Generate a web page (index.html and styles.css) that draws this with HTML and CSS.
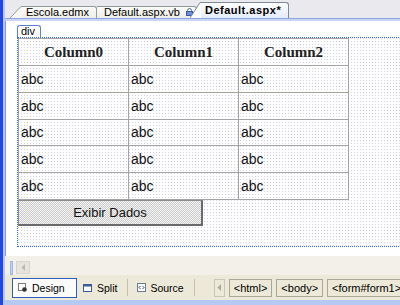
FILE: index.html
```html
<!DOCTYPE html>
<html lang="pt">
<head>
  <meta charset="UTF-8" />
  <title>Default.aspx - Design</title>
  <link rel="stylesheet" href="styles.css">
</head>
<body>
  <div class="window">
    <div class="edge"></div>
    <div class="main">

      <div class="tabbar">
        <div class="tab first">
          <svg class="slant" width="12" height="12" viewBox="0 0 12 12"><path d="M0 12 L11 0.5 L12 0.5 L12 12 Z" fill="#f6f5f0"/><path d="M0 12 L11 0.5 L12 0.5" fill="none" stroke="#919b9c"/></svg>
          <span class="tab-body">Escola.edmx</span>
        </div>
        <div class="tab second">
          <span class="tab-body">Default.aspx.vb
            <svg class="lock" width="7" height="8" viewBox="0 0 7 8"><path d="M1.5 4 V2.5 a2 2 0 0 1 4 0 V4" fill="none" stroke="#4c66b8"/><rect x="0.5" y="3.5" width="6" height="4" fill="#6f8fd8" stroke="#3e58a8"/></svg>
          </span>
        </div>
        <div class="tab active">
          <svg class="slant" width="11" height="16" viewBox="0 0 11 16"><path d="M0 16 L10 0.5 L11 0.5 L11 16 Z" fill="#ffffff"/><path d="M0 16 L10 0.5 L11 0.5" fill="none" stroke="#7f8a99"/></svg>
          <span class="tab-body">Default.aspx*</span>
        </div>
      </div>
      <div class="band"></div>

      <div class="surface">
        <div class="tag">div</div>
        <div class="box">
          <table class="grid">
            <tr><th>Column0</th><th>Column1</th><th>Column2</th></tr>
            <tr><td>abc</td><td>abc</td><td>abc</td></tr>
            <tr><td>abc</td><td>abc</td><td>abc</td></tr>
            <tr><td>abc</td><td>abc</td><td>abc</td></tr>
            <tr><td>abc</td><td>abc</td><td>abc</td></tr>
            <tr><td>abc</td><td>abc</td><td>abc</td></tr>
          </table>
          <button class="btn">Exibir Dados</button>
        </div>
      </div>

      <div class="hscroll">
        <span class="grip"></span>
        <span class="scroll-btn"><svg width="5" height="7" viewBox="0 0 5 7"><path d="M4 0 L0.5 3.5 L4 7 Z" fill="#b8b8b0"/></svg></span>
      </div>

      <div class="viewbar">
        <span class="view selected">
          <svg width="9" height="9" viewBox="0 0 9 9"><rect x="0.5" y="0.5" width="7" height="7" fill="#fff" stroke="#7c7c7c"/><circle cx="6.5" cy="6.5" r="2.3" fill="#333"/></svg>
          Design
        </span>
        <span class="view">
          <svg width="9" height="8" viewBox="0 0 9 8"><rect x="0.5" y="0.5" width="8" height="7" fill="#fff" stroke="#3a5a9c"/><rect x="0.5" y="0.5" width="8" height="2" fill="#3a5a9c"/></svg>
          Split
        </span>
        <span class="sep"></span>
        <span class="view">
          <svg width="9" height="9" viewBox="0 0 9 9"><rect x="0.5" y="0.5" width="8" height="8" fill="#fff" stroke="#6d7c9c"/><path d="M3.5 3 L2 4.5 L3.5 6 M5.5 3 L7 4.5 L5.5 6" fill="none" stroke="#3a4a7a"/></svg>
          Source
        </span>
        <span class="sep"></span>
        <span class="crumb-arrow"><svg width="4" height="7" viewBox="0 0 4 7"><path d="M4 0 L0.5 3.5 L4 7 Z" fill="#a8a8a0"/></svg></span>
        <span class="crumb">&lt;html&gt;</span>
        <span class="crumb">&lt;body&gt;</span>
        <span class="crumb">&lt;form#form1&gt;</span>
      </div>
      <div class="footline"></div>

    </div>
  </div>
</body>
</html>
```

FILE: styles.css
```css
* { box-sizing: border-box; }
body {
  margin: 0;
  font-family: 'Liberation Sans', Arial, sans-serif;
  background: #ffffff;
  color: #000;
}
.window {
  width: 400px;
  height: 305px;
  display: flex;
  overflow: hidden;
}
.edge {
  width: 5px;
  flex: none;
  background: linear-gradient(to right, #1f47e5 0 3px, #bac4ee 3px);
}
.main {
  flex: 1;
  min-width: 0;
  display: flex;
  flex-direction: column;
}

/* document tabs */
.tabbar {
  height: 19px;
  flex: none;
  display: flex;
  align-items: flex-end;
  padding-left: 5px;
  background: #eae9ee;
  border-bottom: 1px solid #8ea5e2;
}
.tab {
  display: flex;
  flex: none;
  align-items: flex-end;
  font-size: 11px;
}
.slant { display: block; flex: none; }
.tab-body {
  display: flex;
  align-items: flex-end;
  height: 12px;
  line-height: 12px;
  background: linear-gradient(#fbfbf8, #eeede6);
  border-top: 1px solid #919b9c;
  border-right: 1px solid #919b9c;
  border-top-right-radius: 3px;
  white-space: nowrap;
}
.first .tab-body { width: 75px; padding-left: 4px; }
.second .tab-body { width: 100px; padding-left: 7px; }
.lock { margin: 0 0 2px 6px; }
.active { margin-left: -7px; position: relative; }
.active .tab-body {
  height: 16px;
  width: 88px;
  padding: 0 0 2px 4px;
  font-weight: bold;
  letter-spacing: 0.5px;
  background: linear-gradient(#ffffff, #e4ebfa);
  border-color: #7f8a99;
}
.band {
  height: 2px;
  flex: none;
  background: #c9d5f5;
}

/* design surface */
.surface {
  height: 235px;
  flex: none;
  border-left: 1px solid #7f9ce0;
  padding: 4px 0 0 11px;
  overflow: hidden;
}
.tag {
  width: 24px;
  height: 12px;
  font-size: 11px;
  line-height: 11px;
  padding-left: 3px;
  border: 1px solid #5b7fd6;
  border-bottom: none;
  border-radius: 3px 3px 0 0;
  background: #fff;
}
.box {
  width: 400px;
  height: 210px;
  border: 1px dotted #3b6fe6;
  border-right: none;
  background: conic-gradient(from 270deg at 1px 1px, #cfd0e6 90deg, transparent 0) 0 0 / 3px 3px;
}
.grid {
  border-collapse: collapse;
  table-layout: fixed;
  width: 331px;
}
.grid th, .grid td {
  border: 1px solid #a4a4a4;
  padding: 0 2px;
  overflow: hidden;
}
.grid th {
  height: 27px;
  font-family: 'Liberation Serif', 'Times New Roman', serif;
  font-size: 15px;
  font-weight: bold;
  color: #222;
  text-align: center;
}
.grid td {
  height: 26.8px;
  font-size: 14px;
  color: #111;
}
.btn {
  display: block;
  width: 185px;
  height: 26px;
  margin: 0;
  padding: 0;
  font-family: 'Liberation Sans', Arial, sans-serif;
  font-size: 13px;
  color: #111;
  border: 1px solid #8c8c8c;
  border-right: 2px solid #6a6a6a;
  border-bottom: 2px solid #6a6a6a;
  background: repeating-conic-gradient(#cccccc 0 25%, #f4f4f4 0 50%) 0 0 / 2px 2px;
}

/* horizontal scroll strip */
.hscroll {
  height: 19px;
  flex: none;
  display: flex;
  align-items: flex-start;
  padding: 5px 0 0 5px;
  background: #f2f0e8;
}
.grip {
  width: 3px;
  height: 14px;
  background: #c2d2f2;
  border: 1px solid #9fb6e6;
}
.scroll-btn {
  width: 14px;
  height: 13px;
  margin-left: 3px;
  display: flex;
  align-items: center;
  justify-content: center;
  background: #e6e4dc;
  border: 1px solid #d6d4cc;
}

/* view switcher + tag navigator */
.viewbar {
  height: 25px;
  flex: none;
  display: flex;
  align-items: center;
  padding-left: 7px;
  background: #ece9d8;
  font-size: 10.5px;
}
.viewbar > * { flex: none; }
.view {
  display: flex;
  align-items: center;
  gap: 5px;
  height: 20px;
  margin-right: 6px;
  white-space: nowrap;
}
.view.selected {
  width: 65px;
  padding-left: 5px;
  background: #fbfbf9;
  border: 1px solid #2e5cc0;
}
.sep {
  width: 1px;
  height: 17px;
  margin: 0 9px 0 4px;
  background: #c5c1ab;
}
.sep + .view { gap: 4px; }
.crumb-arrow {
  width: 11px;
  height: 18px;
  margin-left: 10px;
  display: flex;
  align-items: center;
  justify-content: center;
  border: 1px solid #c8c6ba;
}
.crumb {
  height: 18px;
  margin-left: 4px;
  padding: 0 4px;
  display: flex;
  align-items: center;
  font-size: 11px;
  white-space: nowrap;
  border: 1px solid #a9a79c;
}
.footline {
  flex: 1;
  background: #b6c9f2;
}
```
